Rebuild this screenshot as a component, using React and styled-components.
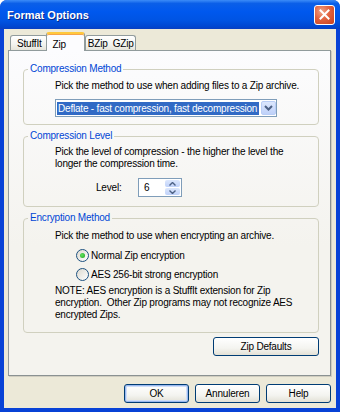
import React from 'react'
import styled, { createGlobalStyle, css } from 'styled-components'

const GlobalStyle = createGlobalStyle`
  html, body {
    margin: 0;
    padding: 0;
    background: #ffffff;
  }
  body {
    font-family: "Liberation Sans", Arial, sans-serif;
    font-size: 10px;
    letter-spacing: -0.2px;
    color: #000;
  }
`

const Window = styled.div`
  width: 340px;
  height: 412px;
  display: flex;
  flex-direction: column;
  background: #0842d6;
  border-radius: 7px 7px 0 0;
  overflow: hidden;
`

const TitleBar = styled.div`
  height: 29px;
  flex: none;
  display: flex;
  align-items: center;
  justify-content: space-between;
  padding: 0 5px 0 7px;
  background: linear-gradient(#3c8cf8 0%, #0b5fe8 12%, #0058ee 40%, #0054e3 70%, #0046d0 92%, #0a3fc0 100%);
`

const Title = styled.span`
  color: #fff;
  font: bold 11px "Liberation Sans", Arial, sans-serif;
  letter-spacing: 0;
  text-shadow: 1px 1px #0b2a8a;
  margin-top: 1px;
`

const CloseButton = styled.div`
  width: 19px;
  height: 18px;
  border: 1px solid #fff;
  border-radius: 3px;
  background: radial-gradient(circle at 35% 30%, #f0a58a 0%, #e2623f 45%, #c8401c 100%);
  display: flex;
  align-items: center;
  justify-content: center;
`

const Body = styled.div`
  flex: 1;
  margin: 0 4px 4px;
  background: #ece9d8;
  display: flex;
  flex-direction: column;
  padding: 3px 5px 0 4px;
`

const TabRow = styled.div`
  height: 18px;
  display: flex;
  align-items: flex-end;
  padding-left: 2px;
`

const Tab = styled.div`
  height: 15px;
  box-sizing: border-box;
  padding: ${p => p.$pad || '0 5px 0 6px'};
  display: flex;
  align-items: center;
  white-space: pre;
  border: 1px solid #919b9c;
  border-bottom: none;
  border-radius: 3px 3px 0 0;
  background: linear-gradient(#ffffff, #f3f3ef 60%, #e6e4da);
  ${p => p.$active && css`
    height: 19px;
    padding: 3px 18px 0 6px;
    margin: 0 0 -1px -2px;
    background: #fcfcfe;
    border-top: 2px solid #ffc83c;
    box-shadow: inset 0 1px 0 #f6a44a;
    position: relative;
    z-index: 1;
  `}
`

const Panel = styled.div`
  height: 326px;
  box-sizing: border-box;
  border: 1px solid #919b9c;
  border-right-color: #8a9192;
  border-bottom-color: #8a9192;
  box-shadow: 1px 1px 0 #d0cdc0;
  background: linear-gradient(#fcfcfe, #f4f3ee 60%, #f4f3ee);
  padding: 12px 0 0 14px;
  display: flex;
  flex-direction: column;
  gap: 5px;
`

const Group = styled.fieldset`
  margin: 0;
  padding: 0;
  width: 296px;
  height: ${p => p.$h}px;
  box-sizing: border-box;
  border: 1px solid #d0d0bf;
  border-radius: 4px;
  min-width: 0;
`

const Legend = styled.legend`
  color: #0046d5;
  padding: 0 2px;
  margin-left: 4px;
  line-height: 12px;
`

const GroupBody = styled.div`
  padding: ${p => p.$pad};
  display: flex;
  flex-direction: column;
  line-height: 12px;
  white-space: nowrap;
`

const Text = styled.div`
  line-height: 12px;
  margin-top: ${p => p.$mt || 0}px;
`

const Select = styled.div`
  margin-top: 7px;
  width: 222px;
  height: 18px;
  box-sizing: border-box;
  border: 1px solid #7f9db9;
  background: #fff;
  display: flex;
  align-items: center;
  padding: 0 0 0 1px;
`

const SelectValue = styled.div`
  width: 202px;
  height: 13px;
  line-height: 13px;
  background: #316ac5;
  color: #fff;
  padding-left: 1px;
  margin-right: 2px;
`

const DropButton = styled.div`
  width: 15px;
  height: 14px;
  box-sizing: border-box;
  border-radius: 2px;
  background: linear-gradient(#dce7fd, #bfd1f9);
  border: 1px solid #b9cdf6;
  display: flex;
  align-items: center;
  justify-content: center;
`

const LevelRow = styled.div`
  display: flex;
  align-items: center;
  margin-top: 8px;
  padding-left: 41px;
`

const LevelLabel = styled.span`
  width: 42px;
`

const Spin = styled.div`
  width: 44px;
  height: 19px;
  box-sizing: border-box;
  border: 1px solid #7f9db9;
  background: #fff;
  display: flex;
  align-items: center;
  justify-content: space-between;
  padding: 1px;
  padding-left: 5px;
`

const SpinButtons = styled.div`
  width: 15px;
  height: 15px;
  display: flex;
  flex-direction: column;
  gap: 1px;
`

const SpinHalf = styled.div`
  flex: 1;
  border-radius: 2px;
  background: linear-gradient(#dce7fd, #bfd1f9);
  display: flex;
  align-items: center;
  justify-content: center;
`

const RadioRow = styled.label`
  display: flex;
  align-items: center;
  gap: 2px;
  margin-left: 21px;
  height: 19px;
  margin-top: ${p => p.$mt || 0}px;
`

const RadioDot = styled.span`
  width: 13px;
  height: 13px;
  box-sizing: border-box;
  border-radius: 50%;
  border: 1px solid #1c5180;
  background: linear-gradient(135deg, #dcd9cf, #ffffff);
  display: flex;
  align-items: center;
  justify-content: center;
  &::after {
    content: "";
    width: 5px;
    height: 5px;
    border-radius: 50%;
    background: ${p => (p.$checked ? 'radial-gradient(circle at 40% 40%, #5fe35f, #21a121)' : 'transparent')};
  }
`

const Button = styled.div`
  width: ${p => p.$w || 65}px;
  height: 19px;
  box-sizing: border-box;
  border: 1px solid #003c74;
  border-radius: 3px;
  background: linear-gradient(#ffffff, #f4f4f0 60%, #e3e1d6);
  display: flex;
  align-items: center;
  justify-content: center;
  ${p => p.$default && css`
    box-shadow: inset 0 0 0 1px #9ab9ef, inset 0 0 0 2px #cfdef8;
  `}
`

const DefaultsRow = styled.div`
  display: flex;
  padding-left: 190px;
  margin-top: -1px;
`

const Footer = styled.div`
  margin-top: 8px;
  display: flex;
  justify-content: flex-end;
  gap: 6px;
`

const Chevron = ({ up }) => (
  <svg width="7" height="4" viewBox="0 0 7 4">
    <path d={up ? 'M0.5 3.5 L3.5 0.5 L6.5 3.5' : 'M0.5 0.5 L3.5 3.5 L6.5 0.5'} fill="none" stroke="#4d6185" strokeWidth="1.4" />
  </svg>
)

const App = () => (
  <>
    <GlobalStyle />
    <Window>
      <TitleBar>
        <Title>Format Options</Title>
        <CloseButton>
          <svg width="11" height="11" viewBox="0 0 11 11">
            <path d="M1.5 1.5 L9.5 9.5 M9.5 1.5 L1.5 9.5" stroke="#fff" strokeWidth="2" strokeLinecap="square" />
          </svg>
        </CloseButton>
      </TitleBar>
      <Body>
        <TabRow>
          <Tab>StuffIt</Tab>
          <Tab $active>Zip</Tab>
          <Tab $pad="0 1px 0 2px">BZip  GZip</Tab>
        </TabRow>
        <Panel>
          <Group $h={62}>
            <Legend>Compression Method</Legend>
            <GroupBody $pad="5px 0 0 31px">
              <Text>Pick the method to use when adding files to a Zip archive.</Text>
              <Select>
                <SelectValue>Deflate - fast compression, fast decompression</SelectValue>
                <DropButton>
                  <svg width="9" height="6" viewBox="0 0 9 6">
                    <path d="M1 1 L4.5 4.5 L8 1" fill="none" stroke="#4d6185" strokeWidth="2" />
                  </svg>
                </DropButton>
              </Select>
            </GroupBody>
          </Group>
          <Group $h={77}>
            <Legend>Compression Level</Legend>
            <GroupBody $pad="4px 0 0 31px">
              <Text>Pick the level of compression - the higher the level the<br />longer the compression time.</Text>
              <LevelRow>
                <LevelLabel>Level:</LevelLabel>
                <Spin>
                  <span>6</span>
                  <SpinButtons>
                    <SpinHalf><Chevron up /></SpinHalf>
                    <SpinHalf><Chevron /></SpinHalf>
                  </SpinButtons>
                </Spin>
              </LevelRow>
            </GroupBody>
          </Group>
          <Group $h={121}>
            <Legend>Encryption Method</Legend>
            <GroupBody $pad="6px 0 0 31px">
              <Text>Pick the method to use when encrypting an archive.</Text>
              <RadioRow $mt={4}><RadioDot $checked />Normal Zip encryption</RadioRow>
              <RadioRow><RadioDot />AES 256-bit strong encryption</RadioRow>
              <Text $mt={1}>
                NOTE: AES encryption is a StuffIt extension for Zip<br />
                encryption.&nbsp; Other Zip programs may not recognize AES<br />
                encrypted Zips.
              </Text>
            </GroupBody>
          </Group>
          <DefaultsRow>
            <Button $w={106}>Zip Defaults</Button>
          </DefaultsRow>
        </Panel>
        <Footer>
          <Button $default>OK</Button>
          <Button>Annuleren</Button>
          <Button>Help</Button>
        </Footer>
      </Body>
    </Window>
  </>
)

export default App
